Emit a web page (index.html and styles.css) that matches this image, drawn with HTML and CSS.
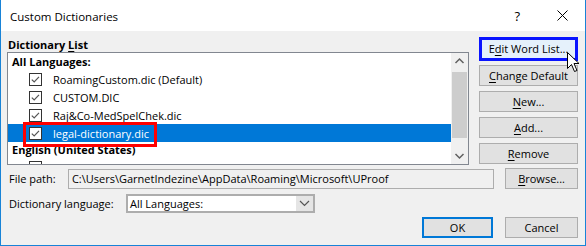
FILE: index.html
```html
<!DOCTYPE html>
<html lang="en">
<head>
  <meta charset="UTF-8">
  <title>Custom Dictionaries</title>
  <link rel="stylesheet" href="styles.css">
</head>
<body>
  <div class="window">
    <div class="titlebar">
      <span class="title">Custom Dictionaries</span>
      <span class="help">?</span>
      <svg class="close" width="11" height="11" viewBox="0 0 11 11"><path d="M0.5 0.5L10.5 10.5M10.5 0.5L0.5 10.5" stroke="#000" stroke-width="1"/></svg>
    </div>

    <div class="dialog">
      <div class="top">
        <div class="list-area">
          <div class="group-label">Dictionary <u>L</u>ist</div>
          <div class="listbox">
            <div class="items">
              <div class="lang">All Languages:</div>
              <div class="item">
                <svg class="check" viewBox="0 0 13 13"><rect x="0.5" y="0.5" width="12" height="12" fill="#fff" stroke="#333"/><path d="M2.8 6.6L5.2 9L10 3.8" fill="none" stroke="#555" stroke-width="1.2"/></svg>
                RoamingCustom.dic (Default)
              </div>
              <div class="item">
                <svg class="check" viewBox="0 0 13 13"><rect x="0.5" y="0.5" width="12" height="12" fill="#fff" stroke="#333"/><path d="M2.8 6.6L5.2 9L10 3.8" fill="none" stroke="#555" stroke-width="1.2"/></svg>
                CUSTOM.DIC
              </div>
              <div class="item">
                <svg class="check" viewBox="0 0 13 13"><rect x="0.5" y="0.5" width="12" height="12" fill="#fff" stroke="#333"/><path d="M2.8 6.6L5.2 9L10 3.8" fill="none" stroke="#555" stroke-width="1.2"/></svg>
                Raj&amp;Co-MedSpelChek.dic
              </div>
              <div class="item selected">
                <svg class="check" viewBox="0 0 13 13"><rect x="0.5" y="0.5" width="12" height="12" fill="#fff" stroke="#333"/><path d="M2.8 6.6L5.2 9L10 3.8" fill="none" stroke="#555" stroke-width="1.2"/></svg>
                legal-dictionary.dic
              </div>
              <div class="lang">English (United States)</div>
              <div class="item">
                <svg class="check" viewBox="0 0 13 13"><rect x="0.5" y="0.5" width="12" height="12" fill="#fff" stroke="#333"/><path d="M2.8 6.6L5.2 9L10 3.8" fill="none" stroke="#555" stroke-width="1.2"/></svg>
                default.dic
              </div>
            </div>
            <div class="scrollbar">
              <svg class="arrow" width="17" height="17" viewBox="0 0 17 17"><path d="M4.5 10L8.5 6L12.5 10" fill="none" stroke="#606060" stroke-width="1.5"/></svg>
              <div class="track"><div class="thumb"></div></div>
              <svg class="arrow" width="17" height="17" viewBox="0 0 17 17"><path d="M4.5 7L8.5 11L12.5 7" fill="none" stroke="#606060" stroke-width="1.5"/></svg>
            </div>
            <div class="marker"></div>
          </div>
        </div>

        <div class="buttons">
          <button class="btn edit">E<u>d</u>it Word List...</button>
          <button class="btn"><u>C</u>hange Default</button>
          <button class="btn"><u>N</u>ew...</button>
          <button class="btn"><u>A</u>dd...</button>
          <button class="btn"><u>R</u>emove</button>
        </div>
      </div>

      <div class="row path-row">
        <span class="label">File path:</span>
        <div class="path-box">C:\Users\GarnetIndezine\AppData\Roaming\Microsoft\UProof</div>
        <button class="btn small"><u>B</u>rowse...</button>
      </div>

      <div class="row lang-row">
        <span class="label">Dictionary lan<u>g</u>uage:</span>
        <div class="combo">
          <span class="combo-text">All Languages:</span>
          <span class="combo-btn"><svg width="11" height="7" viewBox="0 0 11 7"><path d="M1 1L5.5 5.5L10 1" fill="none" stroke="#555" stroke-width="1.2"/></svg></span>
        </div>
      </div>

      <div class="row actions">
        <button class="btn small ok">OK</button>
        <button class="btn small">Cancel</button>
      </div>
    </div>

    <svg class="cursor" width="13" height="21" viewBox="0 0 13 21"><path d="M0.5 0.5L0.5 16.5L4.5 12.5L7.5 19.5L10 18.5L7 11.5L12 11.5Z" fill="#fff" stroke="#000" stroke-width="1" stroke-linejoin="round"/></svg>
  </div>
</body>
</html>
```

FILE: styles.css
```css
* {
  box-sizing: border-box;
}
body {
  margin: 0;
  font-family: 'Open Sans', 'Noto Sans', sans-serif;
  font-size: 11px;
  color: #000;
}
u {
  text-decoration-thickness: 1px;
  text-underline-offset: 2px;
}
.window {
  position: relative;
  width: 586px;
  height: 246px;
  border: 1px solid #1883d7;
  border-top: none;
  background: #f0f0f0;
  overflow: hidden;
}
.titlebar {
  height: 31px;
  background: #fff;
  display: flex;
  align-items: center;
  padding-left: 9px;
}
.title {
  font-size: 11.5px;
  flex: 1;
  padding-top: 1px;
}
.help {
  font-size: 13px;
  margin-right: 37px;
}
.close {
  margin-right: 17px;
}
.dialog {
  padding: 6px 7px 0 6px;
}
.top {
  display: flex;
  gap: 10px;
}
.list-area {
  width: 462px;
}
.group-label {
  font-weight: bold;
  height: 15px;
  line-height: 15px;
  padding-left: 1px;
}
.listbox {
  position: relative;
  height: 113px;
  background: #fff;
  border: 1px solid #828790;
  display: flex;
  overflow: hidden;
}
.items {
  flex: 1;
  padding-top: 1px;
  overflow: hidden;
}
.lang {
  font-weight: bold;
  height: 16px;
  line-height: 16px;
  padding-left: 4px;
}
.item {
  height: 18px;
  display: flex;
  align-items: center;
  padding-left: 21px;
  white-space: nowrap;
}
.item.selected {
  background: #0078d7;
  color: #fff;
}
.check {
  width: 13px;
  height: 13px;
  margin-right: 11px;
  flex: none;
}
.scrollbar {
  width: 17px;
  display: flex;
  flex-direction: column;
  background: #f0f0f0;
}
.scrollbar .arrow {
  flex: none;
}
.track {
  flex: 1;
  padding: 2px 0 9px;
}
.thumb {
  height: 100%;
  background: #cdcdcd;
  margin: 0 1px;
}
.marker {
  position: absolute;
  left: 15px;
  top: 69px;
  width: 134px;
  height: 25px;
  border: 3px solid #f00;
}
.buttons {
  width: 99px;
  display: flex;
  flex-direction: column;
  gap: 5px;
}
.btn {
  font-family: inherit;
  font-size: 11px;
  color: #000;
  height: 21px;
  padding: 0;
  background: #e1e1e1;
  border: 1px solid #adadad;
  white-space: nowrap;
}
.btn.edit {
  height: 24px;
  margin-bottom: -1px;
  background: #e5f1fb;
  border: 3px solid #0a14ff;
  padding-bottom: 1px;
}
.row {
  display: flex;
  align-items: center;
}
.label {
  padding-left: 2px;
}
.path-row {
  margin-top: 3px;
  height: 21px;
}
.path-row .label {
  width: 61px;
}
.path-box {
  width: 427px;
  height: 20px;
  line-height: 18px;
  border: 1px solid #adadad;
  padding-left: 3px;
  white-space: nowrap;
  overflow: hidden;
  margin-right: 11px;
}
.small {
  width: 73px;
}
.lang-row {
  margin-top: 4px;
  height: 20px;
}
.lang-row .label {
  width: 119px;
}
.combo {
  width: 189px;
  height: 19px;
  border: 2px solid #adadad;
  background: #fff;
  display: flex;
}
.combo-text {
  flex: 1;
  padding-left: 2px;
  line-height: 15px;
}
.combo-btn {
  width: 17px;
  background: #e5e5e5;
  display: flex;
  align-items: center;
  justify-content: center;
}
.actions {
  justify-content: flex-end;
  gap: 12px;
  margin-top: 4px;
}
.btn.ok {
  width: 71px;
  border: 2px solid #0078d7;
}
.cursor {
  position: absolute;
  left: 566px;
  top: 52px;
}
```
